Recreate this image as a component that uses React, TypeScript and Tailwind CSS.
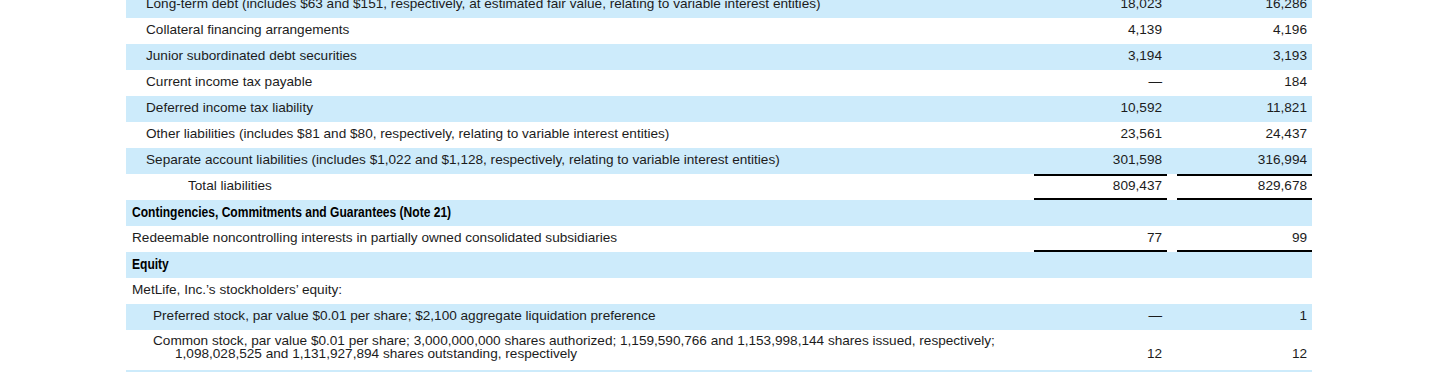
type Row = {
  label: string[];
  a?: string;
  b?: string;
  indent: string;
  blue: boolean;
  bold?: boolean;
  total?: boolean;
  underline?: boolean;
};

const rows: Row[] = [
  {
    label: ['Long-term debt (includes $63 and $151, respectively, at estimated fair value, relating to variable interest entities)'],
    a: '18,023',
    b: '16,286',
    indent: 'pl-[20px]',
    blue: true,
  },
  { label: ['Collateral financing arrangements'], a: '4,139', b: '4,196', indent: 'pl-[20px]', blue: false },
  { label: ['Junior subordinated debt securities'], a: '3,194', b: '3,193', indent: 'pl-[20px]', blue: true },
  { label: ['Current income tax payable'], a: '—', b: '184', indent: 'pl-[20px]', blue: false },
  { label: ['Deferred income tax liability'], a: '10,592', b: '11,821', indent: 'pl-[20px]', blue: true },
  {
    label: ['Other liabilities (includes $81 and $80, respectively, relating to variable interest entities)'],
    a: '23,561',
    b: '24,437',
    indent: 'pl-[20px]',
    blue: false,
  },
  {
    label: ['Separate account liabilities (includes $1,022 and $1,128, respectively, relating to variable interest entities)'],
    a: '301,598',
    b: '316,994',
    indent: 'pl-[20px]',
    blue: true,
  },
  { label: ['Total liabilities'], a: '809,437', b: '829,678', indent: 'pl-[62px]', blue: false, total: true },
  { label: ['Contingencies, Commitments and Guarantees (Note 21)'], indent: 'pl-[6px]', blue: true, bold: true },
  {
    label: ['Redeemable noncontrolling interests in partially owned consolidated subsidiaries'],
    a: '77',
    b: '99',
    indent: 'pl-[6px]',
    blue: false,
    underline: true,
  },
  { label: ['Equity'], indent: 'pl-[6px]', blue: true, bold: true },
  { label: ['MetLife, Inc.’s stockholders’ equity:'], indent: 'pl-[6px]', blue: false },
  {
    label: ['Preferred stock, par value $0.01 per share; $2,100 aggregate liquidation preference'],
    a: '—',
    b: '1',
    indent: 'pl-[27px]',
    blue: true,
  },
  {
    label: [
      'Common stock, par value $0.01 per share; 3,000,000,000 shares authorized; 1,159,590,766 and 1,153,998,144 shares issued, respectively;',
      '1,098,028,525 and 1,131,927,894 shares outstanding, respectively',
    ],
    a: '12',
    b: '12',
    indent: 'pl-[27px]',
    blue: false,
  },
  { label: ['Additional paid-in capital'], a: '30,944', b: '30,882', indent: 'pl-[27px]', blue: true },
];

function NumCell({ value, row }: { value?: string; row: Row }) {
  const multi = row.label.length > 1;
  let cls = 'h-[26px] pt-[4px] leading-[16px]';
  if (row.total) cls = 'h-[26px] border-t-2 border-b-2 border-black pt-[2px] leading-[16px]';
  else if (row.underline) cls = 'h-[26px] border-b-2 border-black pt-[4px] leading-[16px]';
  else if (multi) cls = 'h-[40px] pb-[10px] leading-[13px] flex flex-col justify-end';
  return <div className={`text-right pr-[5px] ${cls}`}>{value ?? ''}</div>;
}

export default function App() {
  return (
    <div className="w-[1440px] h-[372px] overflow-hidden bg-white">
      <div
        className="ml-[126px] w-[1186px] -mt-[8px] text-[13.6px] text-[#1c1c1c]"
        style={{ fontFamily: '"Liberation Sans", Arial, sans-serif' }}
      >
        {rows.map((row, i) => {
          const multi = row.label.length > 1;
          return (
            <div
              key={i}
              className={`grid grid-cols-[908px_133px_10px_135px] ${row.blue ? 'bg-[#cdebfb]' : 'bg-white'}`}
            >
              <div
                className={`${row.indent} ${multi ? 'h-[40px] pt-[4px] leading-[13px]' : 'h-[26px] pt-[4px] leading-[16px]'} whitespace-nowrap overflow-hidden`}
              >
                {row.bold ? (
                  <div className="origin-left scale-x-[0.86] font-bold text-black text-[14px] leading-[16px]">
                    {row.label[0]}
                  </div>
                ) : (
                  row.label.map((l, j) => (
                    <div key={j} className={j > 0 ? 'pl-[22px]' : ''}>
                      {l}
                    </div>
                  ))
                )}
              </div>
              <NumCell value={row.a} row={row} />
              <div />
              <NumCell value={row.b} row={row} />
            </div>
          );
        })}
      </div>
    </div>
  );
}
